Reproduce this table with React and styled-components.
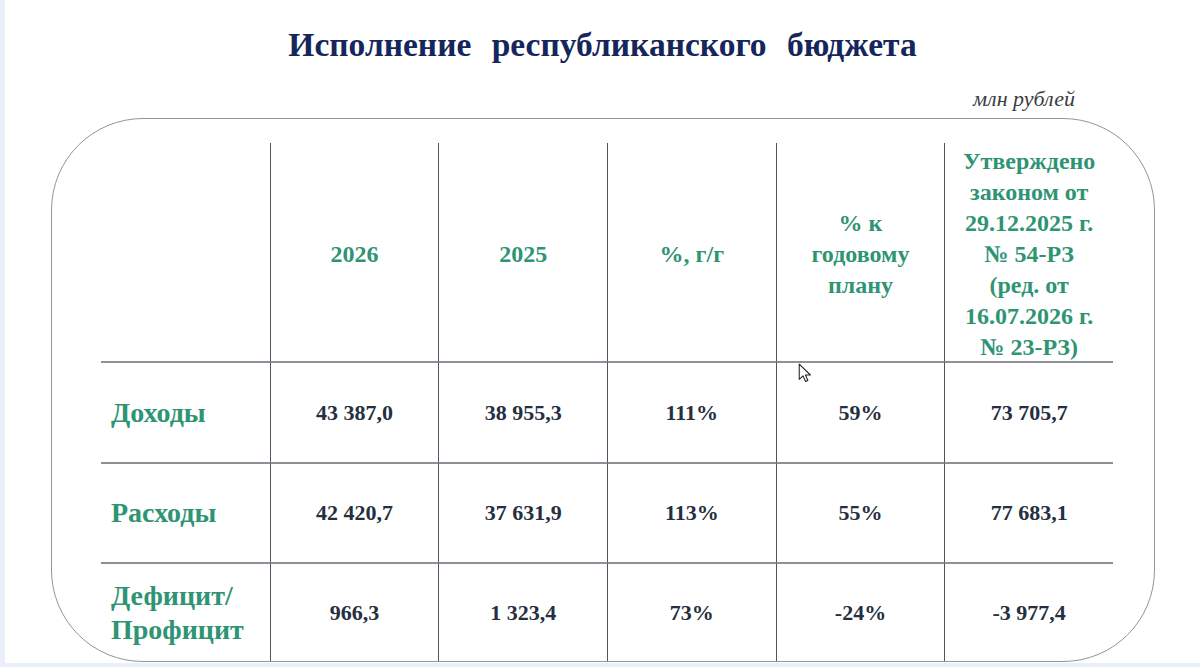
import styled, { createGlobalStyle } from "styled-components";

const serif = `"Liberation Serif", Tinos, "Times New Roman", "DejaVu Serif", serif`;

const GlobalStyle = createGlobalStyle`
  html, body {
    margin: 0;
    padding: 0;
    background: #e9f0fa;
  }
  body {
    font-family: ${serif};
  }
`;

const headers = [
  "",
  "2026",
  "2025",
  "%, г/г",
  "% к\nгодовому\nплану",
  "Утверждено\nзаконом от\n29.12.2025 г.\n№ 54-РЗ\n(ред. от\n16.07.2026 г.\n№ 23-РЗ)",
];

const rows = [
  { label: "Доходы", values: ["43 387,0", "38 955,3", "111%", "59%", "73 705,7"] },
  { label: "Расходы", values: ["42 420,7", "37 631,9", "113%", "55%", "77 683,1"] },
  { label: "Дефицит/\nПрофицит", values: ["966,3", "1 323,4", "73%", "-24%", "-3 977,4"] },
];

function App() {
  return (
    <>
      <GlobalStyle />
      <Slide>
        <Title>Исполнение республиканского бюджета</Title>
        <Units>млн рублей</Units>
        <Frame>
          <Grid>
            {headers.map((h, i) => (
              <HeadCell key={i} $first={i === 0}>
                {h}
              </HeadCell>
            ))}
            {rows.map((r) => (
              <Row key={r.label}>
                <LabelCell>{r.label}</LabelCell>
                {r.values.map((v, j) => (
                  <ValueCell key={j}>{v}</ValueCell>
                ))}
              </Row>
            ))}
          </Grid>
          <Cursor viewBox="0 0 12 19" width="13" height="20">
            <path
              d="M1 1 L1 15.5 L4.6 12.2 L7 17.6 L9.2 16.6 L6.9 11.4 L11.6 11.4 Z"
              fill="#fff"
              stroke="#222"
              strokeWidth="1"
              strokeLinejoin="round"
            />
          </Cursor>
        </Frame>
      </Slide>
    </>
  );
}

/* ─── Styles ─── */
const Slide = styled.div`
  margin-left: 5px;
  width: 1195px;
  height: 663px;
  background: #ffffff;
  display: flex;
  flex-direction: column;
  overflow: hidden;
  font-family: ${serif};
`;

const Title = styled.h1`
  margin: 0;
  height: 90px;
  display: flex;
  align-items: center;
  justify-content: center;
  font-family: ${serif};
  font-weight: 700;
  font-size: 33.5px;
  word-spacing: 12px;
  color: #14265b;
`;

const Units = styled.div`
  height: 30px;
  margin-top: -2px;
  align-self: flex-end;
  margin-right: 125px;
  font-family: ${serif};
  font-style: italic;
  font-size: 22px;
  line-height: 22px;
  color: #3a3d42;
`;

const Frame = styled.div`
  position: relative;
  margin-left: 46px;
  width: 1104px;
  height: 544px;
  box-sizing: border-box;
  border: 1px solid #90959b;
  border-radius: 92px;
  padding: 24px 41px 0 49px;
`;

const Grid = styled.div`
  display: grid;
  grid-template-columns: repeat(6, 1fr);
  grid-template-rows: 218px 101px 100px 99px;
  height: 100%;
`;

const Row = styled.div`
  display: contents;
`;

const Cell = styled.div`
  display: flex;
  align-items: center;
  font-family: ${serif};
  font-weight: 700;
  white-space: pre-line;
  box-sizing: border-box;
`;

const HeadCell = styled(Cell)`
  justify-content: center;
  text-align: center;
  font-size: 24px;
  line-height: 31px;
  color: #2f9473;
  border-left: ${(p) => (p.$first ? "none" : "1px solid #4f555c")};
  padding-top: 4px;
`;

const LabelCell = styled(Cell)`
  padding-left: 10px;
  font-size: 28px;
  line-height: 34px;
  color: #2f9473;
  border-top: 2px solid #8d9197;
`;

const ValueCell = styled(Cell)`
  justify-content: center;
  font-size: 22px;
  color: #262f40;
  border-top: 2px solid #8d9197;
  border-left: 1px solid #4f555c;
`;

const Cursor = styled.svg`
  position: absolute;
  left: 746px;
  top: 244px;
`;

export default App;
